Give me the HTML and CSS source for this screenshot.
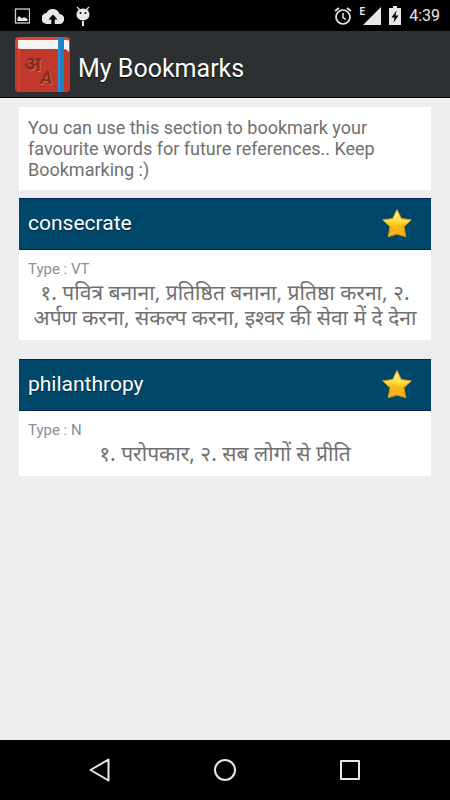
FILE: index.html
```html
<!DOCTYPE html>
<html lang="en">
<head>
    <meta charset="UTF-8">
    <meta name="viewport" content="width=device-width, initial-scale=1.0">
    <title>My Bookmarks</title>
    <link rel="stylesheet" href="styles.css">
</head>
<body>
    <div class="status-bar">
        <div class="status-left">
            <svg width="16" height="16" viewBox="0 0 16 16">
                <rect x="1.500" y="1" width="14" height="14" fill="none" stroke="#cfcfcf" stroke-width="1.300"/>
                <path d="M3.500 13v-3l1.500-2 3 2.500 2-1.500 3.500 2v2z" fill="#e8e8e8"/>
            </svg>
            <svg width="22" height="16" viewBox="0 0 22 16">
                <path d="M17.500 6A7 7 0 0 0 4.500 5 5.400 5.400 0 0 0 5.500 16h3.800v-4.500H6.500L11 6.500l4.500 5h-2.800V16H17a5 5 0 0 0 .5-10z" fill="#e8e8e8"/>
            </svg>
            <svg width="14" height="20" viewBox="0 0 14 20">
                <path d="M1 1l3 3M13 1l-3 3" stroke="#e8e8e8" stroke-width="1.300"/>
                <ellipse cx="7" cy="8.500" rx="6.500" ry="6" fill="#e8e8e8"/>
                <path d="M7 15v5" stroke="#e8e8e8" stroke-width="2"/>
                <circle cx="4.500" cy="7" r="1" fill="#000"/>
                <circle cx="9.500" cy="7" r="1" fill="#000"/>
            </svg>
        </div>
        <div class="status-right">
            <svg width="18" height="18" viewBox="0 0 18 18" fill="none" stroke="#e8e8e8">
                <circle cx="9" cy="10" r="7" stroke-width="1.700"/>
                <path d="M1 4l4-3M17 4l-4-3" stroke-width="1.700"/>
                <path d="M9 6v4.500l3 2" stroke-width="1.500"/>
            </svg>
            <div class="signal">
                <span class="network">E</span>
                <svg width="18" height="18" viewBox="0 0 18 18">
                    <path d="M18 0v18H0z" fill="#e8e8e8"/>
                </svg>
            </div>
            <svg width="12" height="19" viewBox="0 0 12 19">
                <path d="M4 0h4v2h4v17H0V2h4z" fill="#e8e8e8"/>
                <path d="M7.500 4.500L2.500 11.500h3L4.500 16.500 9.500 9.500h-3z" fill="#000"/>
            </svg>
            <time class="clock">4:39</time>
        </div>
    </div>

    <header class="app-header">
        <svg class="logo" width="55" height="55" viewBox="0 0 55 55">
            <rect width="55" height="55" rx="4" fill="#e6402e"/>
            <path d="M3 3h49a3 3 0 0 1 2 2v12l-4-5H5a2 2 0 0 1-2-2z" fill="#f5f5f3"/>
            <path d="M0 8q1 4 5 4h45q4 0 5 4v35q0 4-4 4H4q-4 0-4-4z" fill="#c0392b"/>
            <path d="M4 12v42" stroke="#d35445" stroke-width="1"/>
            <path d="M49 12V3h3a2 2 0 0 1 2 2v10q-2-3-5-3z" fill="#f5f5f3"/>
            <rect x="43" width="6" height="55" fill="#1d82c2"/>
            <path d="M44 0v55" stroke="#3498db" stroke-width="1"/>
            <g class="logo-shine">
                <text class="logo-hindi" x="10" y="35">अ</text>
                <text class="logo-latin" x="26" y="48">A</text>
            </g>
            <g class="logo-ink">
                <text class="logo-hindi" x="9" y="34">अ</text>
                <text class="logo-latin" x="25" y="47">A</text>
            </g>
        </svg>
        <h1>My Bookmarks</h1>
    </header>

    <main class="content">
        <p class="intro">You can use this section to bookmark your favourite words for future references.. Keep Bookmarking :)</p>

        <article class="word">
            <div class="word-header">
                <h2>consecrate</h2>
                <button type="button" class="star" aria-label="Remove consecrate from bookmarks">
                    <svg width="32" height="30" viewBox="0 0 32 30">
                        <defs>
                            <linearGradient id="gold" x1="0" y1="0" x2="0" y2="1">
                                <stop offset="0" stop-color="#fff5a0"/>
                                <stop offset="0.450" stop-color="#ffdc3c"/>
                                <stop offset="0.600" stop-color="#fdbb15"/>
                                <stop offset="1" stop-color="#f5a40c"/>
                            </linearGradient>
                        </defs>
                        <path d="M16 1.500l4.300 9 10 1.400-7.400 6.800 1.900 10L16 26l-8.800 2.700 1.900-10-7.400-6.800 10-1.400z" fill="url(#gold)" stroke="#d99a1b" stroke-width="1" stroke-linejoin="round"/>
                        <path d="M9.500 26l6.500-3 6.500 3" fill="none" stroke="#ffc93a" stroke-width="1"/>
                    </svg>
                </button>
            </div>
            <div class="word-body">
                <p class="type">Type : VT</p>
                <p class="meaning" lang="hi">१. पवित्र बनाना, प्रतिष्ठित बनाना, प्रतिष्ठा करना, २. अर्पण करना, संकल्प करना, इश्वर की सेवा में दे देना</p>
            </div>
        </article>

        <article class="word">
            <div class="word-header">
                <h2>philanthropy</h2>
                <button type="button" class="star" aria-label="Remove philanthropy from bookmarks">
                    <svg width="32" height="30" viewBox="0 0 32 30">
                        <path d="M16 1.500l4.300 9 10 1.400-7.400 6.800 1.900 10L16 26l-8.800 2.700 1.900-10-7.400-6.800 10-1.400z" fill="url(#gold)" stroke="#d99a1b" stroke-width="1" stroke-linejoin="round"/>
                        <path d="M9.500 26l6.500-3 6.500 3" fill="none" stroke="#ffc93a" stroke-width="1"/>
                    </svg>
                </button>
            </div>
            <div class="word-body">
                <p class="type">Type : N</p>
                <p class="meaning" lang="hi">१. परोपकार, २. सब लोगों से प्रीति</p>
            </div>
        </article>
    </main>

    <nav class="nav-bar">
        <button type="button" aria-label="Back">
            <svg width="24" height="24" viewBox="0 0 24 24">
                <path d="M20.500 1.500v21L2.500 12z"/>
            </svg>
        </button>
        <button type="button" aria-label="Home">
            <svg width="24" height="24" viewBox="0 0 24 24">
                <circle cx="12" cy="12" r="10"/>
            </svg>
        </button>
        <button type="button" aria-label="Recent apps">
            <svg width="24" height="24" viewBox="0 0 24 24">
                <rect x="3" y="3" width="18" height="18"/>
            </svg>
        </button>
    </nav>
</body>
</html>
```
FILE: styles.css
```css
* {
    box-sizing: border-box;
}
body {
    font-family: Roboto, 'Noto Sans', sans-serif;
    margin: 0;
    background: #ebedef;
    color: #707070;
    display: flex;
    flex-direction: column;
    min-height: 100vh;
}
h1, h2, p {
    margin: 0;
    font-weight: normal;
}
button {
    background: none;
    border: none;
    padding: 0;
    cursor: pointer;
}
svg {
    display: block;
}
.status-bar {
    height: 31px;
    padding: 0 10px 0 14px;
    background: #000;
    color: #e8e8e8;
    display: flex;
    justify-content: space-between;
    align-items: center;
}
.status-left,
.status-right {
    display: flex;
    align-items: center;
}
.status-left {
    gap: 12px;
}
.status-right {
    gap: 8px;
}
.signal {
    display: flex;
    align-items: flex-start;
}
.network {
    font-size: 10px;
    line-height: 10px;
    font-weight: bold;
}
.signal svg {
    margin-left: -2px;
}
.clock {
    font-size: 16px;
    line-height: 20px;
}
.app-header {
    height: 67px;
    padding: 0 15px;
    background: #2c3033;
    border-bottom: 1px solid #000;
    display: flex;
    align-items: center;
    gap: 8px;
}
.app-header h1 {
    padding-top: 10px;
    font-size: 25px;
    line-height: 32px;
    color: #fff;
    text-shadow: 0 1px 1px #000;
}
.logo-hindi {
    font-family: 'Noto Sans', sans-serif;
    font-size: 20px;
    font-weight: bold;
}
.logo-latin {
    font-size: 19px;
    font-weight: bold;
    font-style: italic;
}
.logo-ink {
    fill: #842b24;
}
.logo-shine {
    fill: #d9685c;
}
.content {
    flex: 1;
    padding: 9px 19px;
}
.intro {
    padding: 10px 9px;
    background: #fff;
    font-size: 18px;
    line-height: 21px;
    margin-bottom: 8px;
}
.word {
    background: #fff;
    margin-bottom: 19px;
}
.word-header {
    height: 52px;
    padding: 0 18px 2px 9px;
    background: #004869;
    border: 1px solid #002257;
    border-width: 1px 0;
    display: flex;
    justify-content: space-between;
    align-items: center;
}
.word-header h2 {
    font-size: 21px;
    line-height: 26px;
    color: #fff;
    text-shadow: 0 1px 1px #002040;
}
.word-body {
    padding: 9px 9px 10px;
}
.type {
    font-size: 15px;
    line-height: 20px;
    color: #87909a;
    margin-bottom: 1px;
}
.meaning {
    font-family: 'Noto Sans', sans-serif;
    font-size: 21px;
    line-height: 25px;
    text-align: center;
}
.nav-bar {
    height: 60px;
    padding: 0 38px;
    background: #000;
    display: flex;
}
.nav-bar button {
    flex: 1;
    display: flex;
    justify-content: center;
    align-items: center;
}
.nav-bar svg {
    fill: none;
    stroke: #e8e8e8;
    stroke-width: 2;
    stroke-linejoin: round;
}
```
